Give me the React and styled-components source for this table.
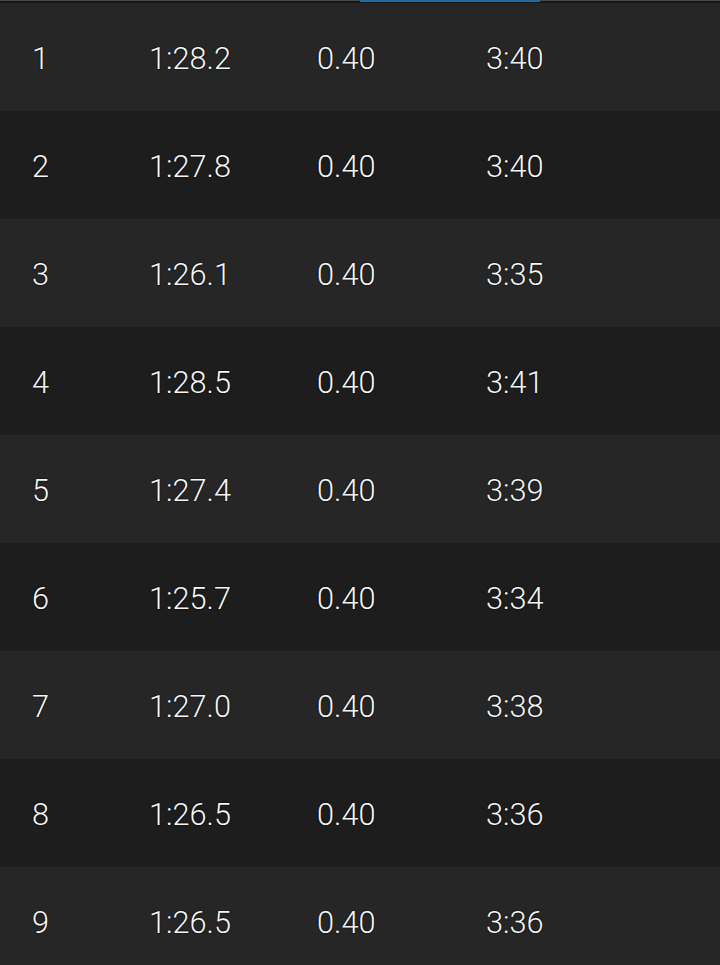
import React from "react";
import styled, { createGlobalStyle } from "styled-components";

const Global = createGlobalStyle`
  html, body { margin: 0; padding: 0; background: #262626; }
  body { font-family: Roboto, "Liberation Sans", sans-serif; }
`;

const Page = styled.div`
  width: 720px;
  height: 965px;
  overflow: hidden;
  background: #262626;
`;

const TabBar = styled.div`
  height: 3px;
  background: #151515;
  border-top: 1px solid #4a4a4a;
  box-sizing: border-box;
  position: relative;
`;

const Indicator = styled.div`
  position: absolute;
  left: 360px;
  top: -1px;
  width: 180px;
  height: 2px;
  background: #1b6da3;
`;

const Row = styled.div`
  display: grid;
  grid-template-columns: 117px 168px 169px 1fr;
  align-items: center;
  box-sizing: border-box;
  height: 108px;
  padding: 2px 0 0 32px;
  background: ${(p) => (p.$alt ? "#1d1d1d" : "#262626")};
`;

const Cell = styled.span`
  display: inline-block;
  font-size: 32px;
  font-weight: 300;
  color: #f6f6f6;
  line-height: 1;
  transform: scaleX(0.96);
  transform-origin: left center;
  text-shadow: 0 0 2px #000;
  white-space: nowrap;
`;

const data = [
  ["1", "1:28.2", "0.40", "3:40"],
  ["2", "1:27.8", "0.40", "3:40"],
  ["3", "1:26.1", "0.40", "3:35"],
  ["4", "1:28.5", "0.40", "3:41"],
  ["5", "1:27.4", "0.40", "3:39"],
  ["6", "1:25.7", "0.40", "3:34"],
  ["7", "1:27.0", "0.40", "3:38"],
  ["8", "1:26.5", "0.40", "3:36"],
  ["9", "1:26.5", "0.40", "3:36"],
];

export default function App() {
  return (
    <Page>
      <Global />
      <TabBar>
        <Indicator />
      </TabBar>
      {data.map((r, i) => (
        <Row key={i} $alt={i % 2 === 1}>
          {r.map((c, j) => (
            <div key={j}>
              <Cell>{c}</Cell>
            </div>
          ))}
        </Row>
      ))}
    </Page>
  );
}
